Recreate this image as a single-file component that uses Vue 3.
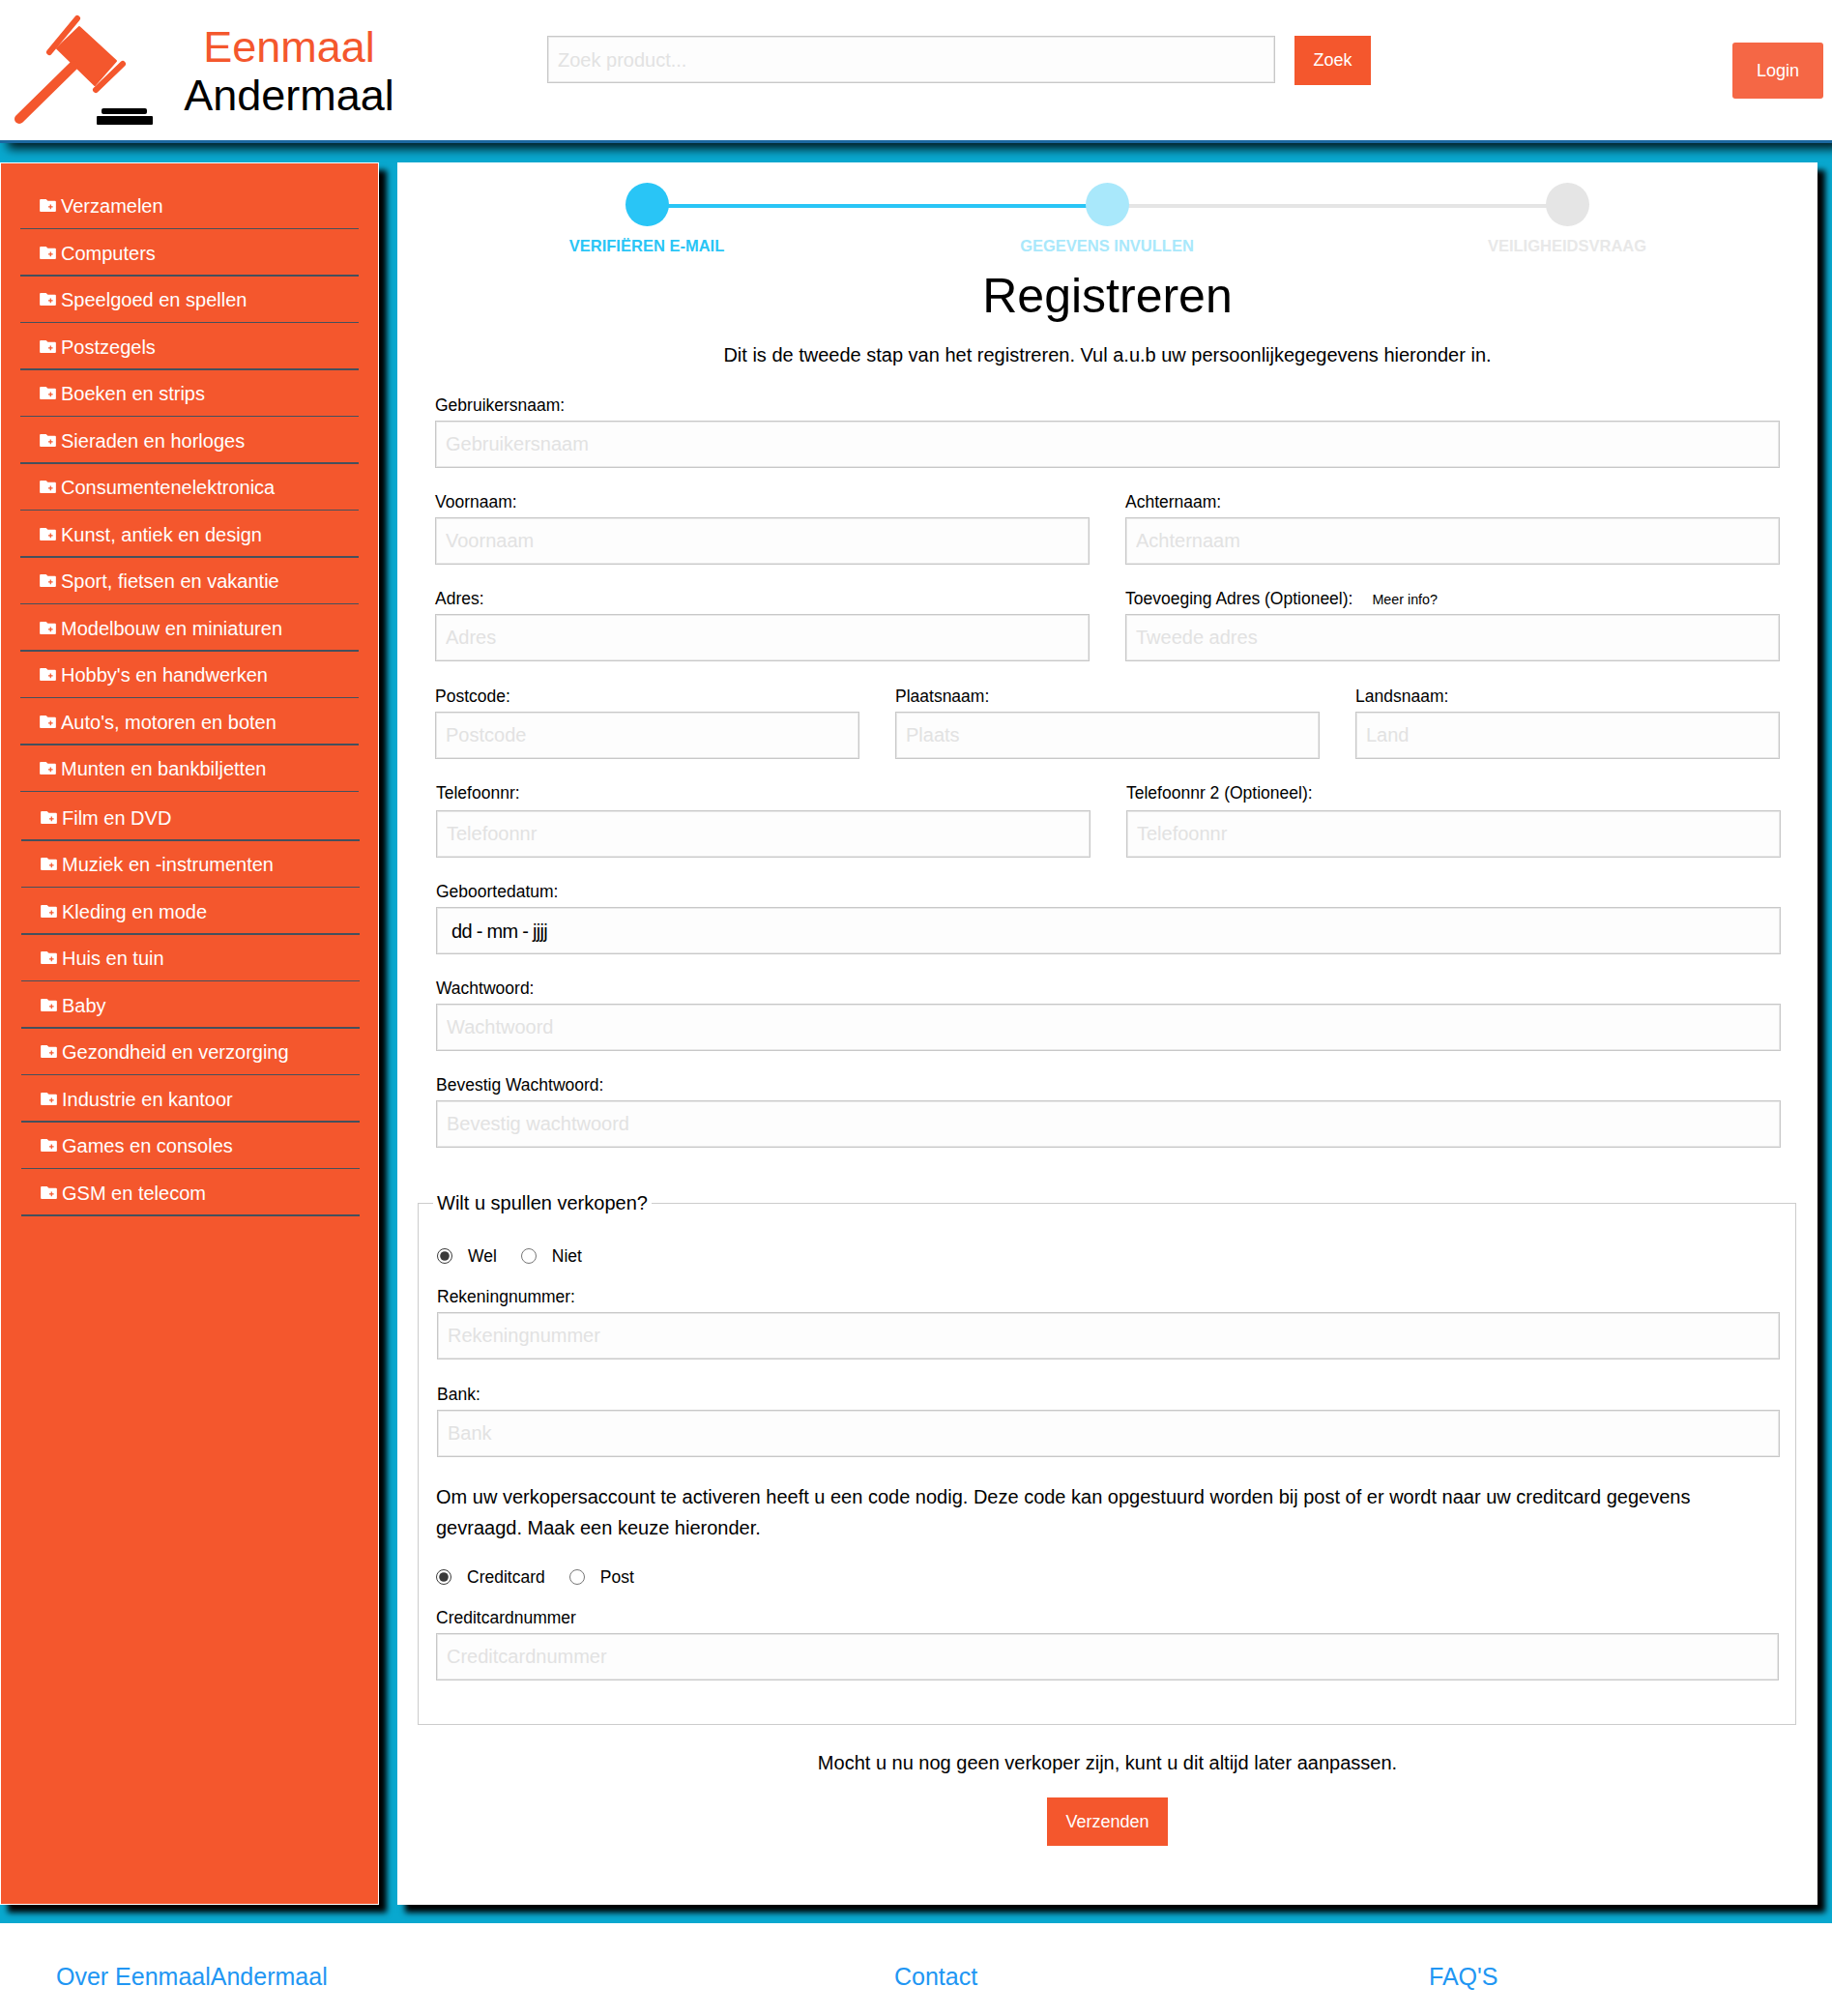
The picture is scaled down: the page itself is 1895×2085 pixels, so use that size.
<template>
  <div class="page">
    <header class="top">
      <div class="brand">
        <svg class="gavel" width="160" height="130" viewBox="0 0 160 130">
          <g fill="#f4572d" stroke="#f4572d" stroke-linecap="round" stroke-linejoin="round">
            <path d="M51 54 80 19" stroke-width="6" />
            <path d="M82 28 120 63 98 88 59 50Z" stroke-width="2" />
            <path d="M127 65 99 92" stroke-width="6" transform="translate(0 1)" />
            <path d="M76 68 20 123" stroke-width="10" />
          </g>
          <rect x="105" y="112" width="47" height="6" rx="2" fill="#000" />
          <rect x="100" y="120" width="58" height="9" rx="1" fill="#000" />
        </svg>
        <div class="wordmark">
          <span class="wordmark__one">Eenmaal</span>
          <span>Andermaal</span>
        </div>
      </div>
      <form class="search" @submit.prevent>
        <input class="search__input" type="text" placeholder="Zoek product..." />
        <button class="btn search__btn" type="button">Zoek</button>
      </form>
      <button class="btn login" type="button">Login</button>
    </header>

    <div class="columns">
      <aside class="sidebar">
        <ul class="cats">
          <li v-for="(cat, i) in categories" :key="cat" class="cat" :class="{ 'cat--low': i >= 13 }">
            <svg class="cat__icon" width="17" height="13" viewBox="0 0 18 14">
              <path d="M1 0h6l2 2h8a1 1 0 0 1 1 1v10a1 1 0 0 1-1 1H1a1 1 0 0 1-1-1V1a1 1 0 0 1 1-1Z" fill="#fff" />
              <path d="M12 6v5M9.5 8.5h5" stroke="#f4572d" stroke-width="1.3" />
            </svg>
            {{ cat }}
          </li>
        </ul>
      </aside>

      <main class="content">
        <div class="steps">
          <div v-for="(step, i) in steps" :key="step" class="step" :class="'step--' + i">
            <span class="step__dot"></span>
            <span class="step__name">{{ step }}</span>
          </div>
        </div>

        <h1 class="title">Registreren</h1>
        <p class="intro">Dit is de tweede stap van het registreren. Vul a.u.b uw persoonlijkegegevens hieronder in.</p>

        <form @submit.prevent>
          <div
            v-for="(row, r) in rows"
            :key="r"
            class="row"
            :class="{ 'row--post': r === 3, 'row--low': r >= 4, 'row--tel': r === 4 }"
            :style="{ gridTemplateColumns: 'repeat(' + row.length + ', 1fr)' }"
          >
            <div v-for="f in row" :key="f.label" class="field">
              <label class="field__label">{{ f.label }}<small v-if="f.more" class="more">Meer info?</small></label>
              <input
                class="input"
                :class="{ 'input--date': f.value }"
                type="text"
                :placeholder="f.placeholder"
                :value="f.value"
              />
            </div>
          </div>

          <fieldset class="seller">
            <legend class="seller__legend">Wilt u spullen verkopen?</legend>
            <div class="radios radios--first">
              <label class="radio"><input type="radio" name="sell" checked />Wel</label>
              <label class="radio"><input type="radio" name="sell" />Niet</label>
            </div>
            <div class="field field--low">
              <label class="field__label">Rekeningnummer:</label>
              <input class="input" type="text" placeholder="Rekeningnummer" />
            </div>
            <div class="field field--low">
              <label class="field__label">Bank:</label>
              <input class="input" type="text" placeholder="Bank" />
            </div>
            <p class="seller__text">Om uw verkopersaccount te activeren heeft u een code nodig. Deze code kan opgestuurd worden bij post of er wordt naar uw creditcard gegevens gevraagd. Maak een keuze hieronder.</p>
            <div class="radios">
              <label class="radio"><input type="radio" name="code" checked />Creditcard</label>
              <label class="radio"><input type="radio" name="code" />Post</label>
            </div>
            <div class="field">
              <label class="field__label">Creditcardnummer</label>
              <input class="input" type="text" placeholder="Creditcardnummer" />
            </div>
          </fieldset>

          <p class="later">Mocht u nu nog geen verkoper zijn, kunt u dit altijd later aanpassen.</p>
          <button class="btn submit" type="button">Verzenden</button>
        </form>
      </main>
    </div>

    <footer class="foot">
      <a class="foot__link">Over EenmaalAndermaal</a>
      <a class="foot__link">Contact</a>
      <a class="foot__link">FAQ'S</a>
    </footer>
  </div>
</template>

<script setup>
const categories = [
  'Verzamelen',
  'Computers',
  'Speelgoed en spellen',
  'Postzegels',
  'Boeken en strips',
  'Sieraden en horloges',
  'Consumentenelektronica',
  'Kunst, antiek en design',
  'Sport, fietsen en vakantie',
  'Modelbouw en miniaturen',
  "Hobby's en handwerken",
  "Auto's, motoren en boten",
  'Munten en bankbiljetten',
  'Film en DVD',
  'Muziek en -instrumenten',
  'Kleding en mode',
  'Huis en tuin',
  'Baby',
  'Gezondheid en verzorging',
  'Industrie en kantoor',
  'Games en consoles',
  'GSM en telecom',
]

const steps = ['VERIFIËREN E-MAIL', 'GEGEVENS INVULLEN', 'VEILIGHEIDSVRAAG']

const rows = [
  [{ label: 'Gebruikersnaam:', placeholder: 'Gebruikersnaam' }],
  [
    { label: 'Voornaam:', placeholder: 'Voornaam' },
    { label: 'Achternaam:', placeholder: 'Achternaam' },
  ],
  [
    { label: 'Adres:', placeholder: 'Adres' },
    { label: 'Toevoeging Adres (Optioneel):', placeholder: 'Tweede adres', more: true },
  ],
  [
    { label: 'Postcode:', placeholder: 'Postcode' },
    { label: 'Plaatsnaam:', placeholder: 'Plaats' },
    { label: 'Landsnaam:', placeholder: 'Land' },
  ],
  [
    { label: 'Telefoonnr:', placeholder: 'Telefoonnr' },
    { label: 'Telefoonnr 2 (Optioneel):', placeholder: 'Telefoonnr' },
  ],
  [{ label: 'Geboortedatum:', value: 'dd - mm - jjjj' }],
  [{ label: 'Wachtwoord:', placeholder: 'Wachtwoord' }],
  [{ label: 'Bevestig Wachtwoord:', placeholder: 'Bevestig wachtwoord' }],
]
</script>

<style>
html,
body {
  margin: 0;
  background: #09a8cf;
}
</style>

<style scoped>
.page {
  font-family: "Liberation Sans", Arial, sans-serif;
  color: #000;
  height: 2085px;
  overflow: hidden;
}

.top {
  display: flex;
  align-items: flex-start;
  height: 145px;
  background: #fff;
  border-bottom: 3px solid #1b68a0;
  box-shadow: 8px 6px 10px rgba(0, 0, 0, 0.85);
  position: relative;
}

.brand {
  display: flex;
  width: 566px;
  flex: none;
}

.gavel {
  display: block;
  flex: none;
}

.wordmark {
  display: flex;
  flex-direction: column;
  align-items: center;
  width: 300px;
  margin-left: -11px;
  padding-top: 24px;
  font-size: 45px;
  line-height: 50px;
}

.wordmark__one {
  color: #f4572d;
}

.search {
  display: flex;
  gap: 20px;
  padding-top: 37px;
}

.search__input {
  box-sizing: border-box;
  width: 753px;
  height: 49px;
  padding: 2px 10px 0;
  border: 1px solid #c8c8c8;
  box-shadow: inset 0 0 0 1px #e8e8e8;
  background: #fdfdfd;
  font: 20px "Liberation Sans", Arial, sans-serif;
}

.search__input::placeholder,
.input::placeholder {
  color: #e2e2e2;
  opacity: 1;
}

.btn {
  border: 0;
  background: #f4572d;
  color: #fff;
  font: 18px "Liberation Sans", Arial, sans-serif;
}

.search__btn {
  width: 79px;
  height: 51px;
}

.login {
  width: 94px;
  height: 58px;
  margin: 44px 9px 0 auto;
  border-radius: 3px;
  background: #f56745;
}

.columns {
  display: grid;
  grid-template-columns: 392px 1469px;
  gap: 19px;
  padding-top: 20px;
}

.sidebar {
  box-sizing: border-box;
  height: 1802px;
  background: #f4572d;
  border: 1px solid #fff;
  box-shadow: 8px 8px 6px #000;
  padding: 20px 20px 0;
}

.cats {
  list-style: none;
  margin: 0;
  padding: 0;
}

.cat {
  box-sizing: border-box;
  display: flex;
  align-items: center;
  gap: 5px;
  height: 48px;
  padding: 2px 0 0 20px;
  border-bottom: 1px solid #45505c;
  color: #fff;
  font-size: 20px;
}

.cat:nth-child(even) {
  height: 49px;
  padding-top: 4px;
  border-bottom-width: 2px;
}

.cat--low {
  margin-left: 1px;
  margin-right: -1px;
  position: relative;
  top: 2px;
}

.cat__icon {
  flex: none;
  margin-top: -2px;
}

.content {
  box-sizing: border-box;
  height: 1802px;
  background: #fff;
  box-shadow: 8px 8px 6px #000;
  padding: 0 39px;
  position: relative;
}

.steps {
  display: grid;
  grid-template-columns: repeat(3, 476px);
  margin: 0 -21px 0 -19px;
  padding-top: 21px;
}

.step {
  position: relative;
  display: flex;
  flex-direction: column;
  align-items: center;
  gap: 10px;
  font-size: 16.5px;
  font-weight: 700;
}

.step__dot {
  position: relative;
  z-index: 1;
  width: 45px;
  height: 45px;
  border-radius: 50%;
}

.step__name {
  line-height: 20px;
}

/* connector runs from this step's centre back to the previous one */
.step + .step::before {
  content: "";
  position: absolute;
  top: 22px;
  left: -50%;
  width: 100%;
  height: 4px;
}

.step--0 {
  color: #29c5f6;
}

.step--0 .step__dot {
  background: #29c5f6;
}

.step--1 {
  color: #a9e8fb;
}

.step--1 .step__dot {
  background: #a9e8fb;
}

.step--1::before {
  background: #29c5f6;
}

.step--2 {
  color: #e8e8e8;
}

.step--2 .step__dot {
  background: #e5e5e5;
}

.step--2::before {
  background: #e5e5e5;
}

.title {
  margin: 14px 0 0;
  font-size: 50px;
  font-weight: 400;
  line-height: 56px;
  text-align: center;
}

.intro {
  margin: 20px 0 0;
  font-size: 20px;
  line-height: 26px;
  text-align: center;
}

.row {
  display: grid;
  gap: 37px;
  margin-top: 27px;
}

.row + .row {
  margin-top: 23px;
}

.row + .row--post {
  margin-top: 24px;
}

.row--low {
  margin-left: 1px;
  margin-right: -1px;
}

.row--tel .input {
  margin-top: 2px;
}

.field__label {
  display: block;
  height: 28px;
  font-size: 17.5px;
  line-height: 24px;
}

.more {
  margin-left: 20px;
  font-size: 14.3px;
}

.input {
  display: block;
  box-sizing: border-box;
  width: 100%;
  height: 49px;
  padding: 0 10px;
  border: 1px solid #c8c8c8;
  box-shadow: inset 0 0 0 1px #e8e8e8;
  background: #fdfdfd;
  font: 20px "Liberation Sans", Arial, sans-serif;
  color: #000;
}

.input--date {
  padding: 2px 0 0 15px;
  letter-spacing: -0.7px;
}

.seller {
  box-sizing: border-box;
  height: 551px;
  margin: 46px -17px 0 -18px;
  padding: 0 17px 0 18px;
  border: 1px solid #ccc;
}

.seller__legend {
  padding: 0 4px;
  margin-left: -3px;
  font-size: 20px;
}

.radios {
  display: flex;
  gap: 25px;
  height: 26px;
  margin-left: 0;
}

.radios--first {
  margin-top: 30px;
  margin-bottom: 17px;
  margin-left: 1px;
}

.radio {
  display: flex;
  align-items: center;
  gap: 16px;
  font-size: 17.5px;
}

.radio input {
  width: 16px;
  height: 16px;
  margin: 0;
  accent-color: #3a3a3a;
}

.field--low {
  margin: 0 -1px 24px 1px;
}

.seller__text {
  margin: 0;
  padding-top: 1px;
  font-size: 20px;
  line-height: 32px;
}

.seller__text + .radios {
  margin-top: 22px;
  margin-bottom: 17px;
}

.later {
  margin: 25px 0 0;
  font-size: 20px;
  line-height: 28px;
  text-align: center;
}

.submit {
  display: block;
  width: 125px;
  height: 50px;
  margin: 22px auto 0;
}

.foot {
  box-sizing: border-box;
  display: grid;
  grid-template-columns: 867px 553px 1fr;
  height: 96px;
  margin-top: 19px;
  padding: 40px 0 0 58px;
  background: #fff;
}

.foot__link {
  color: #2196f3;
  font-size: 25px;
  line-height: 30px;
}
</style>
